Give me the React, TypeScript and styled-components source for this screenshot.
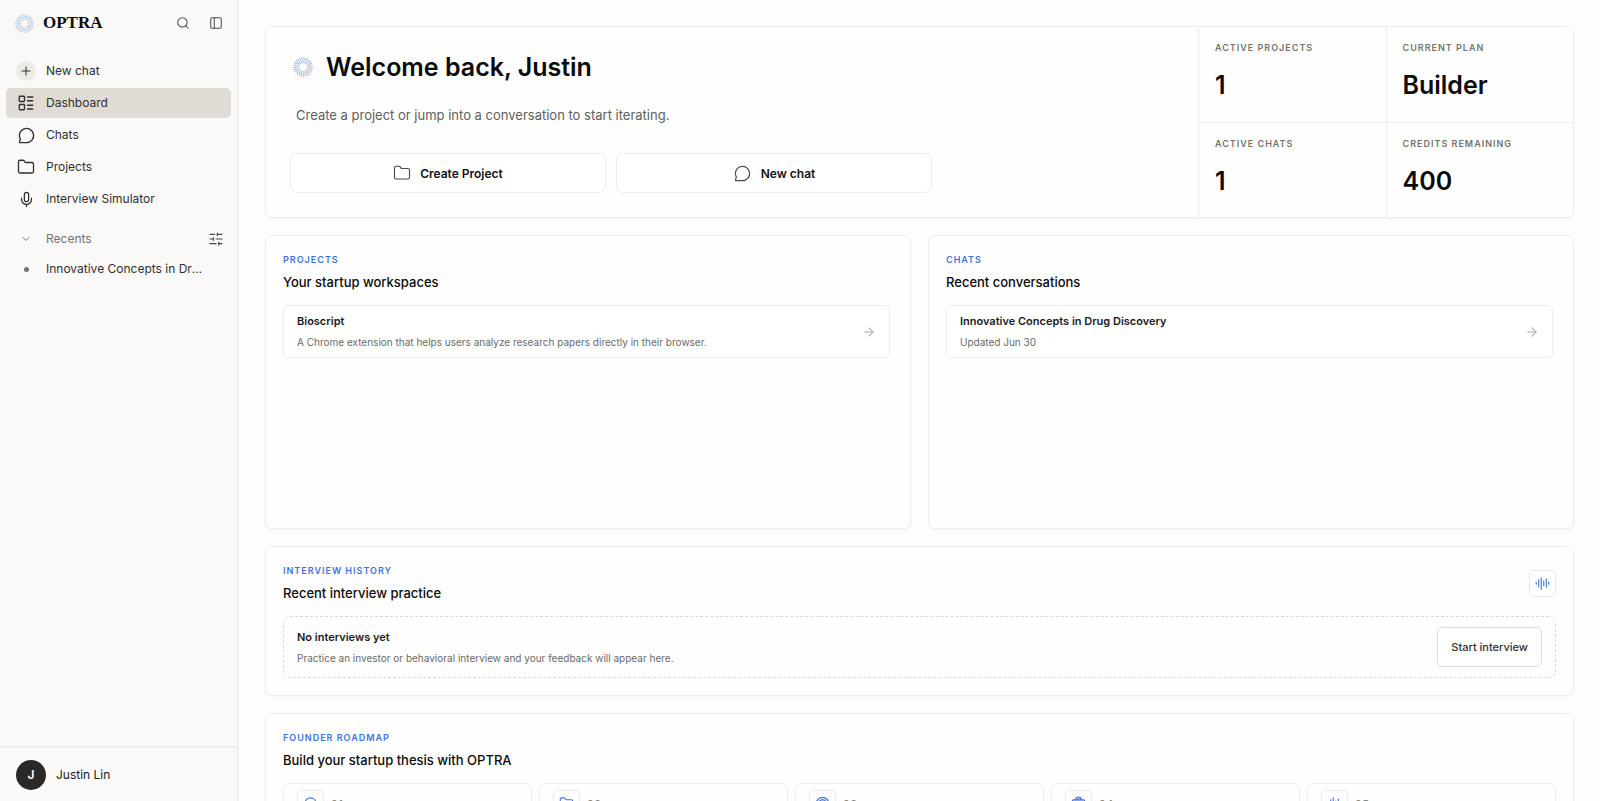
import React from "react";
import styled, { createGlobalStyle, css } from "styled-components";
import {
  ArrowRight,
  AudioLines,
  BriefcaseBusiness,
  ChevronDown,
  Folder,
  LayoutList,
  Mic,
  PanelLeft,
  Plus,
  Search,
  SlidersHorizontal,
  Target,
} from "lucide-react";

const GlobalStyle = createGlobalStyle`
  *, *::before, *::after { box-sizing: border-box; }
  body {
    margin: 0;
    background: #fdfdfd;
    color: #0b0b0b;
    font-family: Inter, "Liberation Sans", sans-serif;
  }
  h1, h2, h3, p, ul, dl, dd { margin: 0; padding: 0; }
  ul { list-style: none; }
  button { font-family: inherit; cursor: pointer; }
  a { color: inherit; text-decoration: none; }
  svg { flex: none; display: block; }
`;

const Shell = styled.div`
  display: grid;
  grid-template-columns: 239px minmax(0, 1fr);
  height: 100vh;
`;

/* Sidebar */

const Sidebar = styled.aside`
  display: flex;
  flex-direction: column;
  min-height: 0;
  background: #faf9f7;
  border-right: 2px solid #efeeeb;
`;

const Brand = styled.header`
  display: flex;
  align-items: center;
  gap: 9px;
  height: 46px;
  padding: 0 13px 0 15px;
`;

const Wordmark = styled.span`
  flex: 1;
  font: 700 17px/20px "Liberation Serif", serif;
`;

const IconButton = styled.button`
  display: grid;
  place-items: center;
  width: 16px;
  height: 16px;
  padding: 0;
  border: 0;
  background: none;
  color: #4a4a47;
`;

const BrandTools = styled.div`
  display: flex;
  gap: 17px;
`;

const Nav = styled.nav`
  flex: 1;
  min-height: 0;
  padding: 10px 6px;
`;

const NavList = styled.ul`
  display: flex;
  flex-direction: column;
  gap: 2px;
`;

const NavLink = styled.a<{ $active?: boolean }>`
  display: flex;
  align-items: center;
  gap: 10px;
  height: 30px;
  padding: 0 10px;
  border-radius: 5px;
  font-size: 12px;
  line-height: 20px;
  color: #30302e;
  background: ${(p) => (p.$active ? "#e0dcd5" : "transparent")};
`;

const NavIcon = styled.span<{ $filled?: boolean }>`
  display: grid;
  place-items: center;
  flex: none;
  width: 20px;
  height: 20px;
  border-radius: 50%;
  background: ${(p) => (p.$filled ? "#ebeae7" : "transparent")};
`;

const RecentsHeader = styled.div`
  display: flex;
  align-items: center;
  gap: 10px;
  height: 30px;
  margin-top: 10px;
  padding: 0 7px 0 10px;
  color: #73726c;
`;

const RecentsLabel = styled.h2`
  flex: 1;
  font-size: 12px;
  font-weight: 400;
  line-height: 20px;
`;

const RecentLink = styled(NavLink)`
  padding-right: 24px;
`;

const Dot = styled.i`
  width: 5px;
  height: 5px;
  border-radius: 50%;
  background: #73726c;
`;

const Ellipsis = styled.span`
  overflow: hidden;
  white-space: nowrap;
  text-overflow: ellipsis;
`;

const Account = styled.button`
  display: flex;
  align-items: center;
  gap: 10px;
  height: 55px;
  padding: 0 16px;
  border: 0;
  border-top: 2px solid #efeeeb;
  background: none;
  color: #1b1b1a;
  font-size: 12px;
  line-height: 16px;
`;

const Avatar = styled.span`
  display: grid;
  place-items: center;
  width: 30px;
  height: 30px;
  border-radius: 50%;
  background: #2a2925;
  color: #fff;
  font-size: 12px;
  font-weight: 600;
`;

/* Main column */

const Main = styled.main`
  display: flex;
  flex-direction: column;
  gap: 17px;
  min-width: 0;
  padding: 26px;
  overflow-y: auto;
  scrollbar-width: none;
`;

const surface = css`
  border: 1px solid #ededeb;
  border-radius: 7px;
  background: #fefefe;
  box-shadow: 0 1px 2px rgba(20, 20, 10, 0.04);
`;

const Hero = styled.section`
  ${surface}
  display: grid;
  grid-template-columns: minmax(0, 1fr) 375px;
  flex: none;
`;

const HeroBody = styled.div`
  padding: 24px;
`;

const HeroTitle = styled.div`
  display: flex;
  align-items: center;
  gap: 13px;
  padding-left: 3px;
  height: 32px;
`;

const Heading = styled.h1`
  font-size: 25px;
  font-weight: 600;
  line-height: 32px;
`;

const HeroText = styled.p`
  padding: 22px 6px 28px;
  font-size: 13px;
  line-height: 20px;
  color: #5e5e5b;
`;

const HeroActions = styled.div`
  display: grid;
  grid-template-columns: repeat(2, minmax(0, 316px));
  gap: 10px;
`;

const ActionButton = styled.button`
  display: flex;
  align-items: center;
  justify-content: center;
  gap: 9px;
  height: 40px;
  border: 1px solid #ececea;
  border-radius: 7px;
  background: #fff;
  color: #111;
  font-size: 12px;
  font-weight: 600;
  svg { color: #4a4a47; }
`;

const Stats = styled.dl`
  display: grid;
  grid-template-columns: 1fr 1fr;
  grid-template-rows: 1fr 1fr;
`;

const Stat = styled.div`
  padding: 16px;
  border-left: 1px solid #ededeb;
  &:nth-child(n + 3) { border-top: 1px solid #ededeb; }
`;

const StatLabel = styled.dt`
  font-size: 9px;
  font-weight: 600;
  line-height: 10px;
  letter-spacing: 1px;
  text-transform: uppercase;
  color: #73736f;
`;

const StatValue = styled.dd`
  padding-top: 16px;
  font-size: 25px;
  font-weight: 600;
  line-height: 32px;
`;

const Columns = styled.div`
  display: grid;
  grid-template-columns: repeat(2, minmax(0, 1fr));
  gap: 17px;
  flex: none;
`;

const Card = styled.section<{ $tall?: boolean }>`
  ${surface}
  flex: none;
  min-height: ${(p) => (p.$tall ? "294px" : "0")};
  padding: 17px ${(p) => (p.$tall ? "20px" : "17px")} 17px 17px;
`;

const CardHeader = styled.header`
  display: flex;
  align-items: center;
  justify-content: space-between;
  padding-bottom: 13px;
`;

const Eyebrow = styled.p`
  font-size: 9px;
  font-weight: 600;
  line-height: 14px;
  letter-spacing: 1px;
  text-transform: uppercase;
  color: #3f72dc;
`;

const CardTitle = styled.h2`
  padding-top: 5px;
  font-size: 13px;
  font-weight: 500;
  line-height: 20px;
`;

const row = css`
  display: flex;
  align-items: center;
  justify-content: space-between;
  padding: 0 13px;
`;

const RowLink = styled.a`
  ${row}
  height: 53px;
  border: 1px solid #ededeb;
  border-radius: 5px;
  background: #fff;
  svg { color: #a5a5a1; }
`;

const EmptyRow = styled.div`
  ${row}
  height: 62px;
  border: 1px dashed #d9d9d6;
  border-radius: 7px;
`;

const RowTitle = styled.h3`
  font-size: 11px;
  font-weight: 600;
  line-height: 16px;
  color: #1b1b1a;
`;

const RowText = styled.p`
  padding-top: 5px;
  font-size: 10px;
  line-height: 16px;
  color: #6b6b67;
`;

const StartButton = styled.button`
  height: 40px;
  padding: 0 13px;
  border: 1px solid #deded9;
  border-radius: 5px;
  background: #fff;
  color: #30302e;
  font-size: 11px;
  font-weight: 500;
`;

const IconTile = styled.span`
  display: grid;
  place-items: center;
  width: 27px;
  height: 27px;
  border: 1px solid #e6e8ec;
  border-radius: 5px;
  background: #fff;
  color: #3f72dc;
`;

const Steps = styled.ol`
  display: grid;
  grid-template-columns: repeat(5, minmax(0, 1fr));
  gap: 7px;
  margin: 0;
  padding: 0;
  list-style: none;
`;

const Step = styled.li`
  ${surface}
  display: flex;
  align-items: flex-start;
  gap: 7px;
  height: 120px;
  padding: 6px 13px;
`;

const StepNumber = styled.span`
  padding-top: 6px;
  font-size: 10px;
  font-weight: 600;
  line-height: 16px;
  letter-spacing: 1px;
  color: #8b8b87;
`;

const rings = [4.4, 6, 7.6, 9.2];

function Logo({ size }: { size: number }) {
  return (
    <svg width={size} height={size} viewBox="0 0 20 20" aria-hidden="true">
      <circle cx="10" cy="10" r="6.8" fill="none" stroke="#eef4fa" strokeWidth="5.4" />
      {rings.map((r, ring) =>
        Array.from({ length: 14 + ring * 5 }, (_, i) => {
          const a = ((i + ring * 0.4) / (14 + ring * 5)) * Math.PI * 2;
          const blue = Math.cos(a - Math.PI * 1.15) > -0.1;
          return (
            <circle
              key={`${ring}-${i}`}
              cx={10 + r * Math.cos(a)}
              cy={10 + r * Math.sin(a)}
              r={0.5}
              fill={blue ? "#5b9fe3" : "#8291a1"}
            />
          );
        })
      )}
    </svg>
  );
}

type IconProps = { size?: number; strokeWidth?: number; fill?: string };

function ChatIcon({ size = 19, strokeWidth = 1.5, fill = "none" }: IconProps) {
  return (
    <svg
      width={size}
      height={size}
      viewBox="0 0 24 24"
      fill={fill}
      stroke="currentColor"
      strokeWidth={strokeWidth}
      strokeLinecap="round"
      strokeLinejoin="round"
      aria-hidden="true"
    >
      <path d="M12 21H4a.8.8 0 0 1-.8-1.100L4.200 16.500A9 9 0 1 1 12 21Z" />
    </svg>
  );
}

const navItems = [
  { label: "New chat", icon: <Plus size={14} strokeWidth={1.75} />, filled: true },
  { label: "Dashboard", icon: <LayoutList size={18} strokeWidth={1.75} />, active: true },
  { label: "Chats", icon: <ChatIcon size={19} strokeWidth={1.75} /> },
  { label: "Projects", icon: <Folder size={18} strokeWidth={1.75} /> },
  { label: "Interview Simulator", icon: <Mic size={17} strokeWidth={1.75} /> },
];

const stats = [
  ["Active projects", "1"],
  ["Current plan", "Builder"],
  ["Active chats", "1"],
  ["Credits remaining", "400"],
];

const steps = [
  { Icon: ChatIcon, fill: "none" },
  { Icon: Folder, fill: "none" },
  { Icon: Target, fill: "#c9d8f6" },
  { Icon: BriefcaseBusiness, fill: "#9db9f0" },
  { Icon: AudioLines, fill: "none" },
];

function TitleBlock({ eyebrow, title }: { eyebrow: string; title: string }) {
  return (
    <div>
      <Eyebrow>{eyebrow}</Eyebrow>
      <CardTitle>{title}</CardTitle>
    </div>
  );
}

function RowCopy({ title, text }: { title: string; text: string }) {
  return (
    <div>
      <RowTitle>{title}</RowTitle>
      <RowText>{text}</RowText>
    </div>
  );
}

export default function App() {
  return (
    <>
      <GlobalStyle />
      <Shell>
        <Sidebar>
          <Brand>
            <Logo size={19} />
            <Wordmark>OPTRA</Wordmark>
            <BrandTools>
              <IconButton aria-label="Search">
                <Search size={14} strokeWidth={1.75} />
              </IconButton>
              <IconButton aria-label="Toggle sidebar">
                <PanelLeft size={14} strokeWidth={1.75} />
              </IconButton>
            </BrandTools>
          </Brand>
          <Nav>
            <NavList>
              {navItems.map((item) => (
                <li key={item.label}>
                  <NavLink href="#" $active={item.active}>
                    <NavIcon $filled={item.filled}>{item.icon}</NavIcon>
                    {item.label}
                  </NavLink>
                </li>
              ))}
            </NavList>
            <RecentsHeader>
              <NavIcon>
                <ChevronDown size={12} strokeWidth={2} />
              </NavIcon>
              <RecentsLabel>Recents</RecentsLabel>
              <IconButton aria-label="Filter recents">
                <SlidersHorizontal size={16} strokeWidth={1.75} />
              </IconButton>
            </RecentsHeader>
            <RecentLink href="#">
              <NavIcon>
                <Dot />
              </NavIcon>
              <Ellipsis>Innovative Concepts in Drug Discovery</Ellipsis>
            </RecentLink>
          </Nav>
          <Account>
            <Avatar>J</Avatar>
            Justin Lin
          </Account>
        </Sidebar>

        <Main>
          <Hero>
            <HeroBody>
              <HeroTitle>
                <Logo size={20} />
                <Heading>Welcome back, Justin</Heading>
              </HeroTitle>
              <HeroText>Create a project or jump into a conversation to start iterating.</HeroText>
              <HeroActions>
                <ActionButton>
                  <Folder size={18} strokeWidth={1.5} />
                  Create Project
                </ActionButton>
                <ActionButton>
                  <ChatIcon size={19} strokeWidth={1.5} />
                  New chat
                </ActionButton>
              </HeroActions>
            </HeroBody>
            <Stats>
              {stats.map(([label, value]) => (
                <Stat key={label}>
                  <StatLabel>{label}</StatLabel>
                  <StatValue>{value}</StatValue>
                </Stat>
              ))}
            </Stats>
          </Hero>

          <Columns>
            <Card $tall>
              <CardHeader>
                <TitleBlock eyebrow="Projects" title="Your startup workspaces" />
              </CardHeader>
              <RowLink href="#">
                <RowCopy
                  title="Bioscript"
                  text="A Chrome extension that helps users analyze research papers directly in their browser."
                />
                <ArrowRight size={14} strokeWidth={1.75} />
              </RowLink>
            </Card>
            <Card $tall>
              <CardHeader>
                <TitleBlock eyebrow="Chats" title="Recent conversations" />
              </CardHeader>
              <RowLink href="#">
                <RowCopy title="Innovative Concepts in Drug Discovery" text="Updated Jun 30" />
                <ArrowRight size={14} strokeWidth={1.75} />
              </RowLink>
            </Card>
          </Columns>

          <Card>
            <CardHeader>
              <TitleBlock eyebrow="Interview history" title="Recent interview practice" />
              <IconTile>
                <AudioLines size={15} strokeWidth={1.75} />
              </IconTile>
            </CardHeader>
            <EmptyRow>
              <RowCopy
                title="No interviews yet"
                text="Practice an investor or behavioral interview and your feedback will appear here."
              />
              <StartButton>Start interview</StartButton>
            </EmptyRow>
          </Card>

          <Card>
            <CardHeader>
              <TitleBlock eyebrow="Founder roadmap" title="Build your startup thesis with OPTRA" />
            </CardHeader>
            <Steps>
              {steps.map(({ Icon, fill }, i) => (
                <Step key={i}>
                  <IconTile>
                    <Icon size={15} strokeWidth={1.75} fill={fill} />
                  </IconTile>
                  <StepNumber>{`0${i + 1}`}</StepNumber>
                </Step>
              ))}
            </Steps>
          </Card>
        </Main>
      </Shell>
    </>
  );
}
